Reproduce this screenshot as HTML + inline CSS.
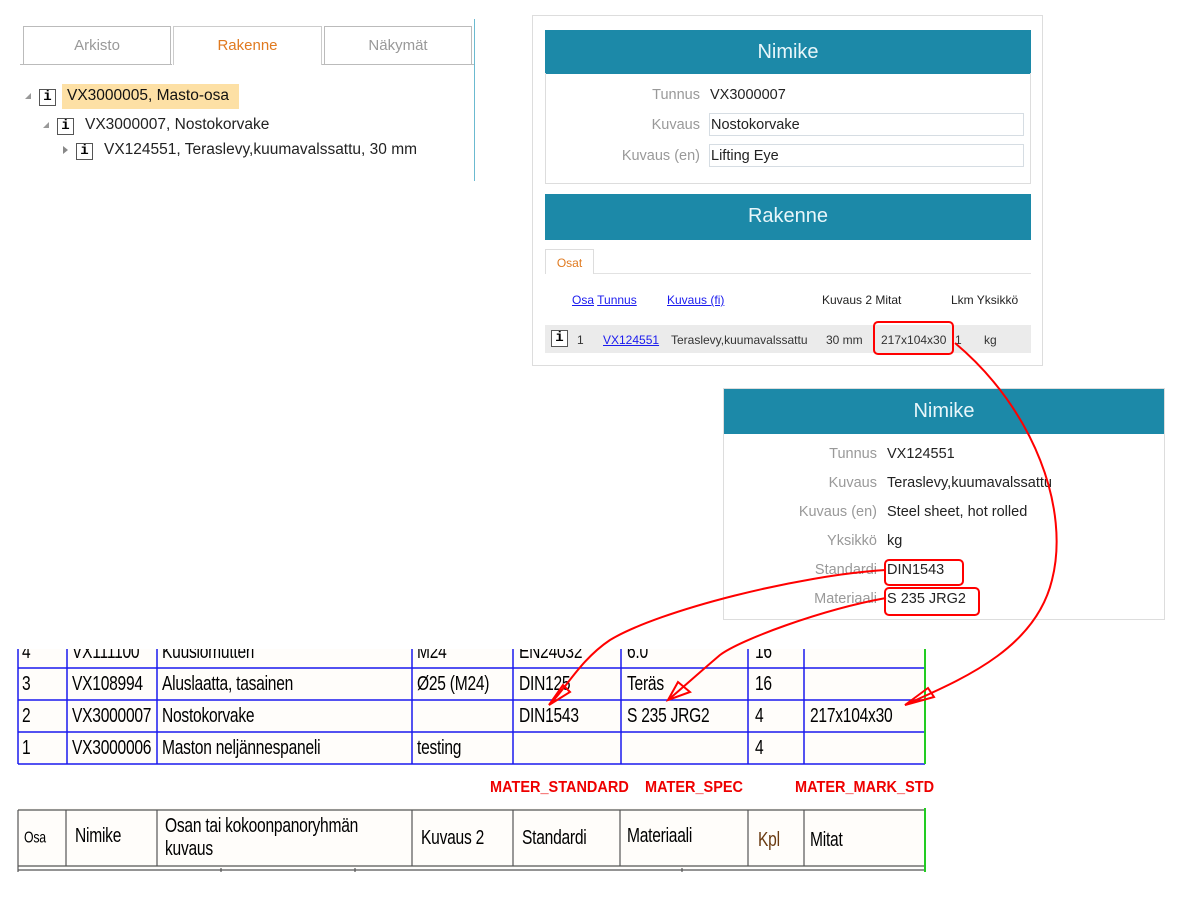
<!DOCTYPE html>
<html><head><meta charset="utf-8"><style>
*{margin:0;padding:0;box-sizing:border-box}
body{width:1189px;height:899px;background:#fff;position:relative;overflow:hidden;font-family:"Liberation Sans","DejaVu Sans",sans-serif}
.a{position:absolute;white-space:nowrap}
.tab{position:absolute;top:26px;height:39px;border:1px solid #bbb;border-bottom:none;font-size:15px;color:#999;text-align:center;line-height:38px}
.ib{position:absolute;width:17px;height:17px;border:1px solid #555;font:bold 14px "Liberation Mono",monospace;text-align:center;line-height:15px;color:#000;background:#fff}
.tri{position:absolute;width:0;height:0}
.hd{position:absolute;background:#1c89a8;color:#e8f6fa;font-size:20px;text-align:center}
.lbl{position:absolute;color:#999;font-size:14.5px;text-align:right;white-space:nowrap}
.val{position:absolute;color:#222;font-size:14.5px;white-space:nowrap}
.inp{position:absolute;border:1px solid #d6dde3}
.lnk{color:#1a1aee;text-decoration:underline}
.bt{position:absolute;font-size:19px;color:#000;transform-origin:0 0;transform:scale(.82,1.05);white-space:nowrap;letter-spacing:-.3px}
.red{position:absolute;color:#e00;font-weight:bold;font-size:14.5px;transform-origin:0 0;transform:scaleY(1.1)}
</style></head><body>

<!-- left tree -->
<div class="tab" style="left:23px;width:148px">Arkisto</div>
<div class="tab" style="left:173px;width:149px;color:#e07a20;border-color:#ccc">Rakenne</div>
<div class="tab" style="left:324px;width:148px">Näkymät</div>
<div class="a" style="left:20px;top:64px;width:152px;height:1px;background:#bbb"></div>
<div class="a" style="left:322px;top:64px;width:152px;height:1px;background:#bbb"></div>
<div class="a" style="left:474px;top:19px;width:1px;height:162px;background:#6bbad0"></div>

<div class="tri" style="left:25px;top:93px;border-left:6px solid transparent;border-bottom:6px solid #999"></div>
<div class="ib" style="left:39px;top:89px">i</div>
<div class="a" style="left:62px;top:84px;width:177px;height:25px;background:#fde0a5"></div>
<div class="a" style="left:67px;top:87px;font-size:15.5px;color:#111">VX3000005, Masto-osa</div>
<div class="tri" style="left:43px;top:122px;border-left:6px solid transparent;border-bottom:6px solid #999"></div>
<div class="ib" style="left:57px;top:118px">i</div>
<div class="a" style="left:85px;top:116px;font-size:15.5px;color:#222">VX3000007, Nostokorvake</div>
<div class="tri" style="left:63px;top:146px;border-top:4px solid transparent;border-bottom:4px solid transparent;border-left:5px solid #888"></div>
<div class="ib" style="left:76px;top:143px">i</div>
<div class="a" style="left:104px;top:141px;font-size:15.5px;color:#222">VX124551, Teraslevy,kuumavalssattu, 30 mm</div>

<!-- top right panel -->
<div class="a" style="left:532px;top:15px;width:511px;height:351px;border:1px solid #ddd"></div>
<div class="hd" style="left:545px;top:30px;width:486px;height:44px;line-height:44px">Nimike</div>
<div class="a" style="left:545px;top:73px;width:486px;height:111px;border:1px solid #ddd;border-top:none"></div>
<div class="lbl" style="left:560px;top:87px;width:140px">Tunnus</div>
<div class="val" style="left:710px;top:87px">VX3000007</div>
<div class="inp" style="left:709px;top:113px;width:315px;height:23px"></div>
<div class="lbl" style="left:560px;top:117px;width:140px">Kuvaus</div>
<div class="val" style="left:711px;top:117px">Nostokorvake</div>
<div class="inp" style="left:709px;top:144px;width:315px;height:23px"></div>
<div class="lbl" style="left:560px;top:148px;width:140px">Kuvaus (en)</div>
<div class="val" style="left:711px;top:148px">Lifting Eye</div>
<div class="hd" style="left:545px;top:194px;width:486px;height:46px;line-height:44px">Rakenne</div>
<div class="a" style="left:545px;top:249px;width:49px;height:25px;border:1px solid #ddd;border-bottom:none;font-size:12px;color:#e07a20;text-align:center;line-height:26px">Osat</div>
<div class="a" style="left:594px;top:273px;width:437px;height:1px;background:#e2e2e2"></div>
<div class="a" style="left:572px;top:293px;font-size:12px"><span class="lnk">Osa</span> <span class="lnk">Tunnus</span></div>
<div class="a lnk" style="left:667px;top:293px;font-size:12px">Kuvaus (fi)</div>
<div class="a" style="left:822px;top:293px;font-size:12px;color:#222">Kuvaus 2 Mitat</div>
<div class="a" style="left:951px;top:293px;font-size:12px;color:#222">Lkm Yksikkö</div>
<div class="a" style="left:545px;top:325px;width:486px;height:28px;background:#ebebeb"></div>
<div class="ib" style="left:551px;top:330px">i</div>
<div class="a" style="left:577px;top:333px;font-size:12px;color:#333">1</div>
<div class="a lnk" style="left:603px;top:333px;font-size:12px">VX124551</div>
<div class="a" style="left:671px;top:333px;font-size:12px;color:#333">Teraslevy,kuumavalssattu</div>
<div class="a" style="left:826px;top:333px;font-size:12px;color:#333">30 mm</div>
<div class="a" style="left:881px;top:333px;font-size:12px;color:#333">217x104x30</div>
<div class="a" style="left:955px;top:333px;font-size:12px;color:#333">1</div>
<div class="a" style="left:984px;top:333px;font-size:12px;color:#333">kg</div>
<div class="a" style="left:873px;top:321px;width:81px;height:34px;border:2px solid #f00;border-radius:5px"></div>

<!-- second panel -->
<div class="a" style="left:723px;top:388px;width:442px;height:232px;border:1px solid #ddd"></div>
<div class="hd" style="left:724px;top:389px;width:440px;height:45px;line-height:44px">Nimike</div>
<div class="lbl" style="left:740px;top:446px;width:137px">Tunnus</div>
<div class="val" style="left:887px;top:446px">VX124551</div>
<div class="lbl" style="left:740px;top:475px;width:137px">Kuvaus</div>
<div class="val" style="left:887px;top:475px">Teraslevy,kuumavalssattu</div>
<div class="lbl" style="left:740px;top:504px;width:137px">Kuvaus (en)</div>
<div class="val" style="left:887px;top:504px">Steel sheet, hot rolled</div>
<div class="lbl" style="left:740px;top:533px;width:137px">Yksikkö</div>
<div class="val" style="left:887px;top:533px">kg</div>
<div class="lbl" style="left:740px;top:562px;width:137px">Standardi</div>
<div class="val" style="left:887px;top:562px">DIN1543</div>
<div class="lbl" style="left:740px;top:591px;width:137px">Materiaali</div>
<div class="val" style="left:887px;top:591px">S 235 JRG2</div>
<div class="a" style="left:884px;top:559px;width:80px;height:27px;border:2px solid #f00;border-radius:5px"></div>
<div class="a" style="left:884px;top:587px;width:96px;height:29px;border:2px solid #f00;border-radius:5px"></div>

<!-- bottom table -->
<svg class="a" style="left:0;top:640px" width="1189" height="259">
<rect x="18" y="8" width="907" height="116" fill="#fffdfa"/>
<rect x="18" y="168" width="907" height="60" fill="#fffdfa"/>
<g stroke="#1a1aee" stroke-width="1.5" fill="none">
<line x1="18" y1="28" x2="925" y2="28"/><line x1="18" y1="60" x2="925" y2="60"/><line x1="18" y1="92" x2="925" y2="92"/><line x1="18" y1="124" x2="925" y2="124"/>
<line x1="18" y1="8" x2="18" y2="124"/><line x1="67" y1="8" x2="67" y2="124"/><line x1="157" y1="8" x2="157" y2="124"/><line x1="412" y1="8" x2="412" y2="124"/><line x1="513" y1="8" x2="513" y2="124"/><line x1="621" y1="8" x2="621" y2="124"/><line x1="748" y1="8" x2="748" y2="124"/><line x1="804" y1="8" x2="804" y2="124"/>
</g>
<line x1="925" y1="8" x2="925" y2="124" stroke="#2c2" stroke-width="2"/>
<g stroke="#555" stroke-width="1.2" fill="none">
<line x1="18" y1="170" x2="925" y2="170"/><line x1="18" y1="226" x2="925" y2="226"/><line x1="18" y1="230" x2="925" y2="230"/>
<line x1="18" y1="170" x2="18" y2="232"/><line x1="66" y1="170" x2="66" y2="226"/><line x1="157" y1="170" x2="157" y2="226"/><line x1="412" y1="170" x2="412" y2="226"/><line x1="513" y1="170" x2="513" y2="226"/><line x1="620" y1="170" x2="620" y2="226"/><line x1="748" y1="170" x2="748" y2="226"/><line x1="804" y1="170" x2="804" y2="226"/>
<line x1="221" y1="228" x2="221" y2="232"/><line x1="355" y1="228" x2="355" y2="232"/><line x1="682" y1="228" x2="682" y2="232"/>
</g>
<line x1="925" y1="168" x2="925" y2="232" stroke="#2c2" stroke-width="2"/>
</svg>
<div class="bt" style="left:22px;top:641px">4</div>
<div class="bt" style="left:72px;top:641px">VX111100</div>
<div class="bt" style="left:162px;top:641px">Kuusiomutteri</div>
<div class="bt" style="left:417px;top:641px">M24</div>
<div class="bt" style="left:519px;top:641px">EN24032</div>
<div class="bt" style="left:627px;top:641px">6.0</div>
<div class="bt" style="left:755px;top:641px">16</div>
<div class="a" style="left:0;top:630px;width:940px;height:19px;background:#fff"></div>

<div class="bt" style="left:22px;top:673px">3</div>
<div class="bt" style="left:72px;top:673px">VX108994</div>
<div class="bt" style="left:162px;top:673px">Aluslaatta, tasainen</div>
<div class="bt" style="left:417px;top:673px">Ø25 (M24)</div>
<div class="bt" style="left:519px;top:673px">DIN125</div>
<div class="bt" style="left:627px;top:673px">Teräs</div>
<div class="bt" style="left:755px;top:673px">16</div>
<div class="bt" style="left:22px;top:705px">2</div>
<div class="bt" style="left:72px;top:705px">VX3000007</div>
<div class="bt" style="left:162px;top:705px">Nostokorvake</div>
<div class="bt" style="left:519px;top:705px">DIN1543</div>
<div class="bt" style="left:627px;top:705px">S 235 JRG2</div>
<div class="bt" style="left:755px;top:705px">4</div>
<div class="bt" style="left:810px;top:705px">217x104x30</div>
<div class="bt" style="left:22px;top:737px">1</div>
<div class="bt" style="left:72px;top:737px">VX3000006</div>
<div class="bt" style="left:162px;top:737px">Maston neljännespaneli</div>
<div class="bt" style="left:417px;top:737px">testing</div>
<div class="bt" style="left:755px;top:737px">4</div>

<div class="red" style="left:490px;top:779px">MATER_STANDARD</div>
<div class="red" style="left:645px;top:779px">MATER_SPEC</div>
<div class="red" style="left:795px;top:779px">MATER_MARK_STD</div>

<div class="bt" style="left:24px;top:829px;font-size:15px">Osa</div>
<div class="bt" style="left:75px;top:825px">Nimike</div>
<div class="bt" style="left:165px;top:815px;line-height:22px">Osan tai kokoonpanoryhmän<br>kuvaus</div>
<div class="bt" style="left:421px;top:827px">Kuvaus 2</div>
<div class="bt" style="left:522px;top:827px">Standardi</div>
<div class="bt" style="left:627px;top:825px">Materiaali</div>
<div class="bt" style="left:758px;top:829px;color:#6a3a10">Kpl</div>
<div class="bt" style="left:810px;top:829px">Mitat</div>

<!-- arrows -->
<svg class="a" style="left:0;top:0" width="1189" height="899" fill="none" stroke="#f00" stroke-width="2">
<path d="M955,343 C1035,410 1070,510 1052,580 C1035,650 960,680 905,705"/>
<path d="M928,688 L905,705 L934,697 Z"/>
<path d="M886,570 C800,575 660,610 610,640 C580,660 565,690 549,705"/>
<path d="M563,685 L549,705 L570,692 Z"/>
<path d="M886,598 C820,610 740,640 720,655 C700,672 680,690 668,700"/>
<path d="M678,682 L668,700 L690,692 Z"/>
</svg>
</body></html>
